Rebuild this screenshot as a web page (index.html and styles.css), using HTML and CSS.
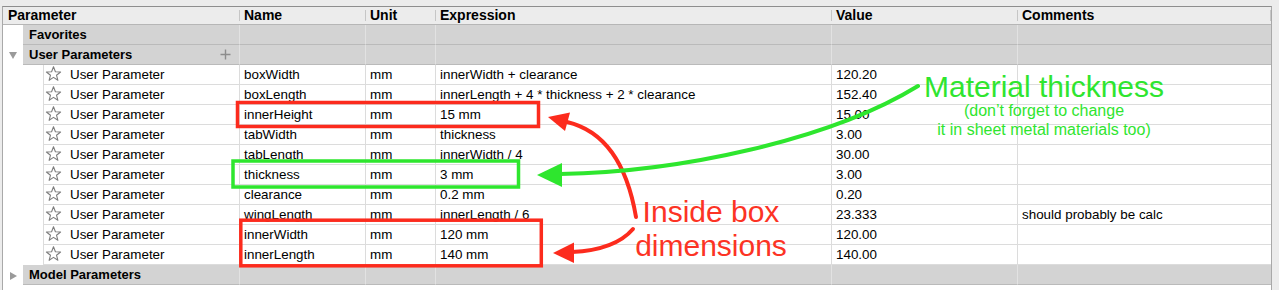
FILE: index.html
```html
<!DOCTYPE html>
<html>
<head>
<meta charset="utf-8">
<title>Parameters</title>
<link rel="stylesheet" href="styles.css">
</head>
<body>
<div class="page">
  <div class="frame">
    <div class="row head">
      <div class="hc first-h">Parameter</div>
      <div class="hc">Name</div>
      <div class="hc">Unit</div>
      <div class="hc">Expression</div>
      <div class="hc">Value</div>
      <div class="hc">Comments</div>
    </div>

    <div class="row group">
      <div class="first"><span class="twisty"></span><div class="label">Favorites</div></div>
      <div class="c"></div><div class="c"></div><div class="c"></div><div class="c"></div><div class="c last"></div>
    </div>

    <div class="row group">
      <div class="first">
        <span class="twisty"><svg width="8" height="7" viewBox="0 0 8 7"><polygon points="0,0 8,0 4,7" fill="#9a9a9a"/></svg></span>
        <div class="label"><span>User Parameters</span><svg class="plus" width="11" height="11" viewBox="0 0 11 11"><path d="M5.5 0.5V10.5M0.5 5.5H10.5" stroke="#8c8c8c" stroke-width="1.4"/></svg></div>
      </div>
      <div class="c"></div><div class="c"></div><div class="c"></div><div class="c"></div><div class="c last"></div>
    </div>

    <div class="row leaf">
      <div class="first"><span class="indent"></span><div class="label"><svg class="star" width="17" height="16" viewBox="0 0 17 16"><polygon points="8.5,0.8 10.4,5.7 15.6,6 11.5,9.2 12.9,14.3 8.5,11.4 4.1,14.3 5.5,9.2 1.4,6 6.6,5.7" fill="none" stroke="#7d7d7d" stroke-width="1.1" stroke-linejoin="round"/></svg><span>User Parameter</span></div></div>
      <div class="c">boxWidth</div><div class="c">mm</div><div class="c">innerWidth + clearance</div><div class="c">120.20</div><div class="c last"></div>
    </div>
    <div class="row leaf">
      <div class="first"><span class="indent"></span><div class="label"><svg class="star" width="17" height="16" viewBox="0 0 17 16"><polygon points="8.5,0.8 10.4,5.7 15.6,6 11.5,9.2 12.9,14.3 8.5,11.4 4.1,14.3 5.5,9.2 1.4,6 6.6,5.7" fill="none" stroke="#7d7d7d" stroke-width="1.1" stroke-linejoin="round"/></svg><span>User Parameter</span></div></div>
      <div class="c">boxLength</div><div class="c">mm</div><div class="c">innerLength + 4 * thickness + 2 * clearance</div><div class="c">152.40</div><div class="c last"></div>
    </div>
    <div class="row leaf">
      <div class="first"><span class="indent"></span><div class="label"><svg class="star" width="17" height="16" viewBox="0 0 17 16"><polygon points="8.5,0.8 10.4,5.7 15.6,6 11.5,9.2 12.9,14.3 8.5,11.4 4.1,14.3 5.5,9.2 1.4,6 6.6,5.7" fill="none" stroke="#7d7d7d" stroke-width="1.1" stroke-linejoin="round"/></svg><span>User Parameter</span></div></div>
      <div class="c">innerHeight</div><div class="c">mm</div><div class="c">15 mm</div><div class="c">15.00</div><div class="c last"></div>
    </div>
    <div class="row leaf">
      <div class="first"><span class="indent"></span><div class="label"><svg class="star" width="17" height="16" viewBox="0 0 17 16"><polygon points="8.5,0.8 10.4,5.7 15.6,6 11.5,9.2 12.9,14.3 8.5,11.4 4.1,14.3 5.5,9.2 1.4,6 6.6,5.7" fill="none" stroke="#7d7d7d" stroke-width="1.1" stroke-linejoin="round"/></svg><span>User Parameter</span></div></div>
      <div class="c">tabWidth</div><div class="c">mm</div><div class="c">thickness</div><div class="c">3.00</div><div class="c last"></div>
    </div>
    <div class="row leaf">
      <div class="first"><span class="indent"></span><div class="label"><svg class="star" width="17" height="16" viewBox="0 0 17 16"><polygon points="8.5,0.8 10.4,5.7 15.6,6 11.5,9.2 12.9,14.3 8.5,11.4 4.1,14.3 5.5,9.2 1.4,6 6.6,5.7" fill="none" stroke="#7d7d7d" stroke-width="1.1" stroke-linejoin="round"/></svg><span>User Parameter</span></div></div>
      <div class="c">tabLength</div><div class="c">mm</div><div class="c">innerWidth / 4</div><div class="c">30.00</div><div class="c last"></div>
    </div>
    <div class="row leaf">
      <div class="first"><span class="indent"></span><div class="label"><svg class="star" width="17" height="16" viewBox="0 0 17 16"><polygon points="8.5,0.8 10.4,5.7 15.6,6 11.5,9.2 12.9,14.3 8.5,11.4 4.1,14.3 5.5,9.2 1.4,6 6.6,5.7" fill="none" stroke="#7d7d7d" stroke-width="1.1" stroke-linejoin="round"/></svg><span>User Parameter</span></div></div>
      <div class="c">thickness</div><div class="c">mm</div><div class="c">3 mm</div><div class="c">3.00</div><div class="c last"></div>
    </div>
    <div class="row leaf">
      <div class="first"><span class="indent"></span><div class="label"><svg class="star" width="17" height="16" viewBox="0 0 17 16"><polygon points="8.5,0.8 10.4,5.7 15.6,6 11.5,9.2 12.9,14.3 8.5,11.4 4.1,14.3 5.5,9.2 1.4,6 6.6,5.7" fill="none" stroke="#7d7d7d" stroke-width="1.1" stroke-linejoin="round"/></svg><span>User Parameter</span></div></div>
      <div class="c">clearance</div><div class="c">mm</div><div class="c">0.2 mm</div><div class="c">0.20</div><div class="c last"></div>
    </div>
    <div class="row leaf">
      <div class="first"><span class="indent"></span><div class="label"><svg class="star" width="17" height="16" viewBox="0 0 17 16"><polygon points="8.5,0.8 10.4,5.7 15.6,6 11.5,9.2 12.9,14.3 8.5,11.4 4.1,14.3 5.5,9.2 1.4,6 6.6,5.7" fill="none" stroke="#7d7d7d" stroke-width="1.1" stroke-linejoin="round"/></svg><span>User Parameter</span></div></div>
      <div class="c">wingLength</div><div class="c">mm</div><div class="c">innerLength / 6</div><div class="c">23.333</div><div class="c last">should probably be calc</div>
    </div>
    <div class="row leaf">
      <div class="first"><span class="indent"></span><div class="label"><svg class="star" width="17" height="16" viewBox="0 0 17 16"><polygon points="8.5,0.8 10.4,5.7 15.6,6 11.5,9.2 12.9,14.3 8.5,11.4 4.1,14.3 5.5,9.2 1.4,6 6.6,5.7" fill="none" stroke="#7d7d7d" stroke-width="1.1" stroke-linejoin="round"/></svg><span>User Parameter</span></div></div>
      <div class="c">innerWidth</div><div class="c">mm</div><div class="c">120 mm</div><div class="c">120.00</div><div class="c last"></div>
    </div>
    <div class="row leaf">
      <div class="first"><span class="indent"></span><div class="label"><svg class="star" width="17" height="16" viewBox="0 0 17 16"><polygon points="8.5,0.8 10.4,5.7 15.6,6 11.5,9.2 12.9,14.3 8.5,11.4 4.1,14.3 5.5,9.2 1.4,6 6.6,5.7" fill="none" stroke="#7d7d7d" stroke-width="1.1" stroke-linejoin="round"/></svg><span>User Parameter</span></div></div>
      <div class="c">innerLength</div><div class="c">mm</div><div class="c">140 mm</div><div class="c">140.00</div><div class="c last"></div>
    </div>

    <div class="row group">
      <div class="first">
        <span class="twisty"><svg width="7" height="8" viewBox="0 0 7 8"><polygon points="0,0 7,4 0,8" fill="#9a9a9a"/></svg></span>
        <div class="label">Model Parameters</div>
      </div>
      <div class="c"></div><div class="c"></div><div class="c"></div><div class="c"></div><div class="c last"></div>
    </div>
  </div>

  <svg class="annot" width="1279" height="290" viewBox="0 0 1279 290">
    <g fill="none" stroke="#fc2b1d" stroke-width="3.5">
      <rect x="237.5" y="102.5" width="301" height="24"/>
      <rect x="240.8" y="220.2" width="300.5" height="45.6"/>
    </g>
    <rect x="233" y="161" width="285.5" height="26" fill="none" stroke="#2ee62e" stroke-width="3.5"/>
    <g fill="none" stroke="#fc2b1d" stroke-width="4" stroke-linecap="round">
      <path d="M636 217 Q622 135 567 122"/>
      <path d="M633 229 Q615 250 572 252"/>
    </g>
    <g fill="#fc2b1d">
      <polygon points="548,117 570,112.5 565,131"/>
      <polygon points="553,253 574,242.5 574,263"/>
    </g>
    <path d="M918 86 C830 140 680 172 560 174" fill="none" stroke="#2ee62e" stroke-width="4" stroke-linecap="round"/>
    <polygon points="537,175 562,163 562,187" fill="#2ee62e"/>
  </svg>

  <div class="note note-green">
    <div class="big">Material thickness</div>
    <div class="small">(don’t forget to change<br>it in sheet metal materials too)</div>
  </div>
  <div class="note note-red">Inside box<br>dimensions</div>
</div>
</body>
</html>
```

FILE: styles.css
```css
* { box-sizing: content-box; }

body {
  margin: 0;
  background: #ececec;
  font-family: "Liberation Sans", Arial, sans-serif;
  font-size: 13.4px;
  color: #000;
}

.page {
  position: relative;
  height: 290px;
  overflow: hidden;
}

.frame {
  margin: 6px 7px 0 2px;
  height: 283px;
  background: #fff;
  border-top: 1px solid #8e8e8e;
  border-left: 1px solid #a9a9a9;
  border-right: 1px solid #a9a9a9;
}

.row {
  display: grid;
  grid-template-columns: 237px 126px 70px 396px 186px 253px;
}

/* header */
.head {
  background: #ececec;
  height: 17px;
  border-bottom: 1px solid #b6b6b6;
}

.hc {
  font-weight: bold;
  font-size: 14px;
  margin-top: 3px;
  height: 11px;
  line-height: 10px;
  padding-left: 4px;
  border-right: 1px solid #c6c6c6;
  white-space: nowrap;
}

.hc.first-h { padding-left: 5px; }

/* shared cells */
.c, .label {
  height: 18px;
  padding-top: 1px;
  line-height: 18px;
  white-space: nowrap;
}

.c.last { border-right: none !important; }

.first {
  display: flex;
}

/* group rows */
.twisty {
  width: 20px;
  display: flex;
  align-items: center;
  justify-content: center;
  padding-top: 1px;
}

.twisty svg { display: block; }

.group .label {
  flex: 1;
  background: #d3d3d3;
  border-bottom: 1px solid #bababa;
  border-right: 1px solid #e2e2e2;
  font-weight: bold;
  font-size: 13px;
  padding-left: 6px;
  padding-right: 8px;
  display: flex;
  justify-content: space-between;
  align-items: center;
}

.group .label .plus { display: block; margin-top: -1px; }

.group .c {
  background: #d3d3d3;
  border-bottom: 1px solid #bababa;
  border-right: 1px solid #e2e2e2;
}

/* leaf rows */
.indent { width: 40px; }

.leaf .label {
  flex: 1;
  border-left: 1px solid #dcdcdc;
  border-bottom: 1px solid #dcdcdc;
  border-right: 1px solid #dcdcdc;
  display: flex;
  align-items: flex-start;
}

.leaf .label .star {
  display: block;
  margin-left: 1px;
  margin-right: 8px;
}

.leaf .c {
  border-bottom: 1px solid #dcdcdc;
  border-right: 1px solid #dcdcdc;
  padding-left: 4px;
}

/* annotations overlay */
.annot {
  position: absolute;
  left: 0;
  top: 0;
  pointer-events: none;
}

.note {
  position: absolute;
  text-align: center;
  white-space: nowrap;
}

.note-green {
  left: 904px;
  top: 72px;
  width: 280px;
  color: #2fe52f;
}

.note-green .big {
  font-size: 30px;
  line-height: 29px;
}

.note-green .small {
  font-size: 16px;
  line-height: 19px;
}

.note-red {
  left: 611px;
  top: 195px;
  width: 200px;
  font-size: 30px;
  line-height: 34px;
  color: #fc3324;
}
```
